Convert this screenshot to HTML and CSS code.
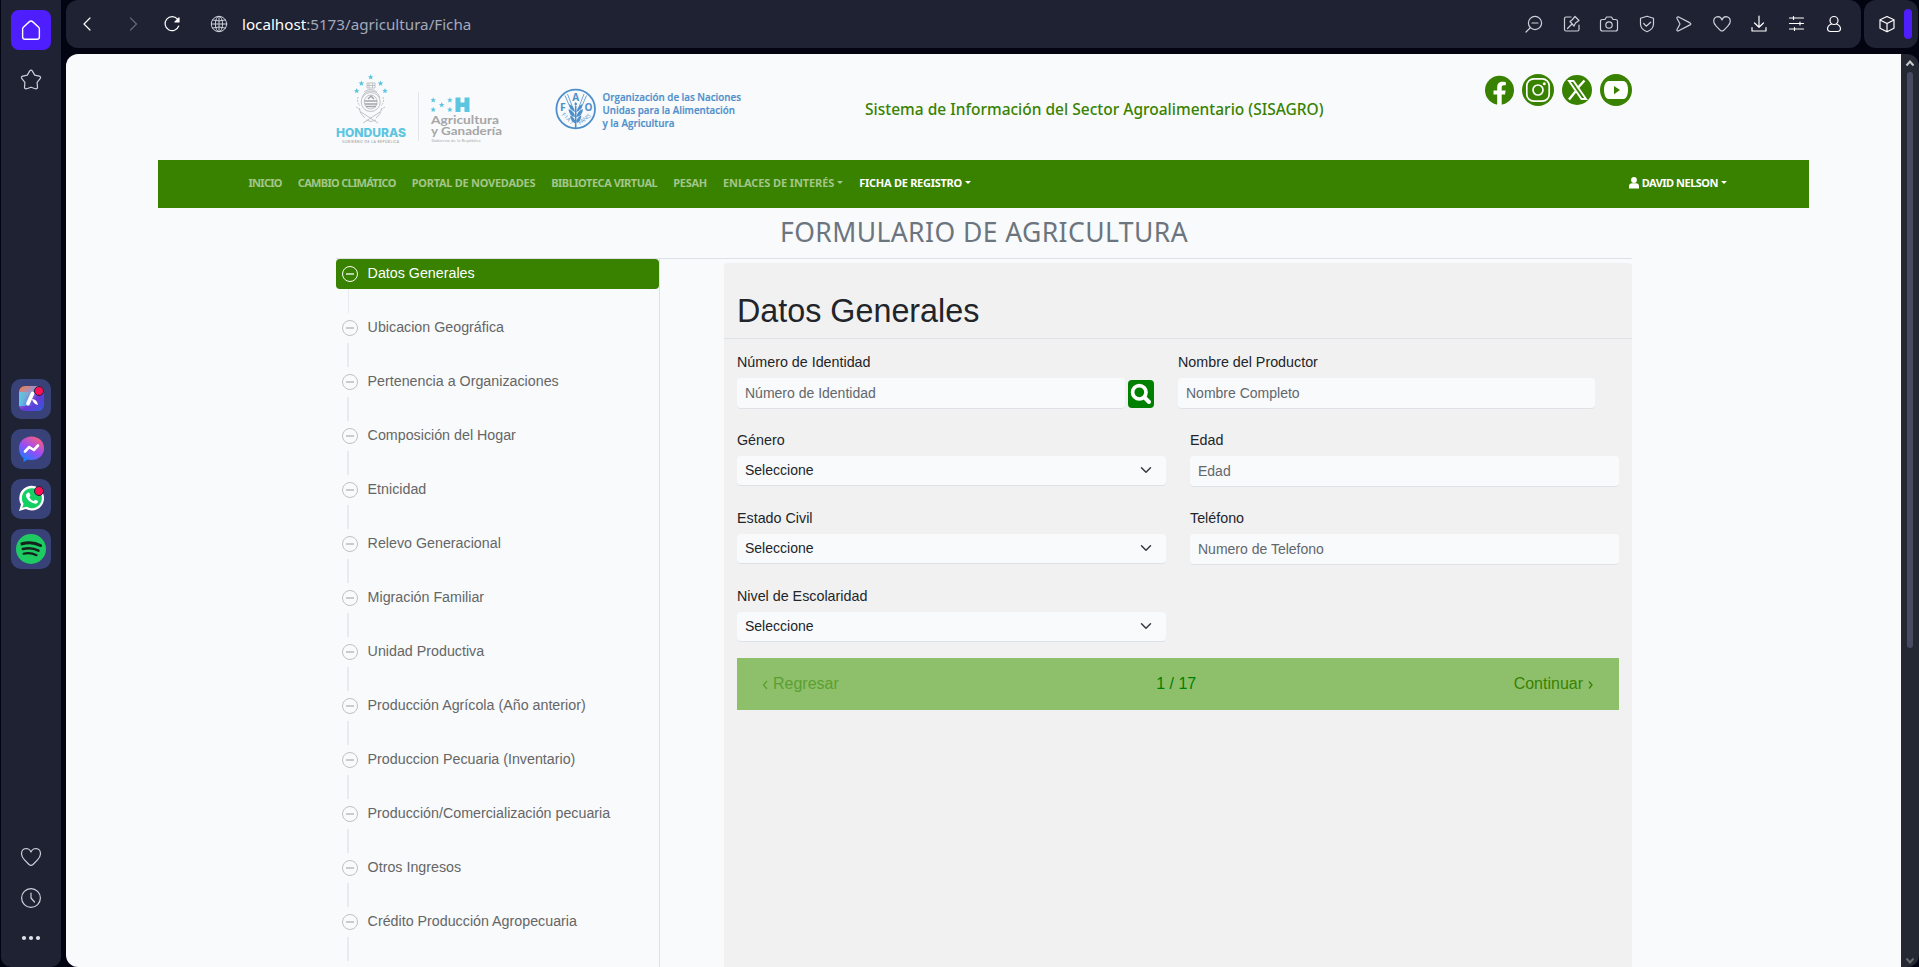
FILE: index.html
```html
<!DOCTYPE html>
<html lang="es">
<head>
<meta charset="utf-8">
<title>SISAGRO - Formulario de Agricultura</title>
<link rel="stylesheet" href="styles.css">
</head>
<body>
<div class="browser">
  <aside class="rail">
    <div class="rail-top">
      <div class="home"><svg width="24" height="24" viewBox="0 0 24 24"><path d="M3.5 9.4 10.3 3q1.7-1.500 3.400 0l6.800 6.400q.5.6.5 1.400v8.700q0 2.500-2.500 2.500h-13q-2.500 0-2.500-2.500v-8.700q0-.8.5-1.400z"/></svg></div>
      <svg class="line" width="24" height="24" viewBox="0 0 24 24"><path d="M10.600 3.100q1.400-2 2.800 0l2.300 4 4.500 1q2.200.7.900 2.600l-3 3.700.4 4.700q-.1 2.200-2.200 1.600L12 19.200l-4.300 1.500q-2.100.6-2.200-1.600l.4-4.700-3-3.700q-1.300-1.900.9-2.600l4.500-1z"/></svg>
    </div>
    <div class="rail-apps">
      <div class="tile"><svg width="40" height="40" viewBox="0 0 40 40"><defs><linearGradient id="aria" x1="0" y1="0" x2=".8" y2="1"><stop offset="0" stop-color="#ff7a3d"/><stop offset=".35" stop-color="#9b8fc4"/><stop offset=".65" stop-color="#6a35d8"/><stop offset="1" stop-color="#3b55d8"/></linearGradient><linearGradient id="ariaside"><stop offset="0" stop-color="#55c9e8"/><stop offset=".6" stop-color="#55c9e8" stop-opacity="0"/></linearGradient></defs><rect x="8" y="7" width="25" height="25" rx="6" fill="url(#aria)"/><rect x="8" y="13" width="25" height="14" fill="url(#ariaside)"/><path d="M21.500 14.500 17 24.500" stroke="#fff" stroke-width="3.800" stroke-linecap="round"/><path d="M21 20q5 0 6 6-5-1-6-6z" fill="#fff"/><circle cx="28" cy="12" r="4.500" fill="#ff1053" stroke="#20233a" stroke-width="1"/></svg></div>
      <div class="tile"><svg width="40" height="40" viewBox="0 0 40 40"><defs><linearGradient id="msg" x1=".8" y1="0" x2=".2" y2="1"><stop offset="0" stop-color="#ff5f78"/><stop offset=".5" stop-color="#9a4cf5"/><stop offset="1" stop-color="#0a84ff"/></linearGradient></defs><path d="M20.500 7.500c7.200 0 12.500 5 12.500 11.700S27.700 31 20.500 31q-2 0-3.700-.5L12.500 33v-3.800C9.600 27 8 23.500 8 19.200 8 12.500 13.300 7.500 20.500 7.500z" fill="url(#msg)"/><path d="m14 22.500 4.200-4.500 4.600 3 4.200-4.500" fill="none" stroke="#fff" stroke-width="2.600" stroke-linecap="round" stroke-linejoin="round"/></svg></div>
      <div class="tile"><svg width="40" height="40" viewBox="0 0 40 40"><path d="m8 32 2-6.500a12.400 12.400 0 1 1 4.800 4.600z" fill="#fff"/><path d="m11.300 28.800 1.300-4a10 10 0 1 1 3.200 3z" fill="#13cf64"/><path d="M16.500 14c1-.8 1.800-.5 2.200.6l.7 1.600c.3.800-1.200 1.600-.9 2.200q1.200 2.500 3.800 3.500c.8.300 1.400-1.500 2.200-1.200l2 1c.9.500.6 1.700-.5 2.500-3 2.200-12-3.600-10.900-8.600q.3-1 1.400-1.600z" fill="#fff"/><circle cx="28" cy="12" r="4.500" fill="#ff1053" stroke="#20233a" stroke-width="1"/></svg></div>
      <div class="tile"><svg width="40" height="40" viewBox="0 0 40 40"><circle cx="20" cy="20" r="15" fill="#1ecb62"/><g fill="none" stroke="#14211c" stroke-linecap="round"><path d="M11 14.800q10-2.800 18.500 1.700" stroke-width="3.100"/><path d="M11.800 20q8.500-2.200 15.700 1.600" stroke-width="2.500"/><path d="M12.500 24.700q7-1.600 13 1.500" stroke-width="2.100"/></g></svg></div>
    </div>
    <div class="rail-bottom">
      <svg class="line" width="24" height="24" viewBox="0 0 24 24"><path d="M12 7Q10.500 3.500 7 3.500 2.500 3.800 2.500 9q.2 3 3 5.800l4.500 4.700q2 1.700 4 0l4.500-4.700q2.800-2.800 3-5.800 0-5.200-4.500-5.500Q13.500 3.500 12 7z"/></svg>
      <svg class="line" width="24" height="24" viewBox="0 0 24 24"><circle cx="12" cy="12" r="9.400"/><path d="M12 7v5l3.500 4"/></svg>
      <svg width="24" height="24" viewBox="0 0 24 24" fill="#dfe2ec"><circle cx="5" cy="12" r="2.100"/><circle cx="12" cy="12" r="2.100"/><circle cx="19" cy="12" r="2.100"/></svg>
    </div>
  </aside>

  <div class="window">
    <div class="bars">
      <header class="toolbar">
        <svg class="line bright back" width="24" height="24" viewBox="0 0 24 24"><path d="m15 6-6 6 6 6"/></svg>
        <svg class="line dim" width="24" height="24" viewBox="0 0 24 24"><path d="m9.500 6 6 6-6 6"/></svg>
        <svg class="line bright reload" width="24" height="24" viewBox="0 0 24 24"><path d="M17.500 7.200a7 7 0 1 0 1.200 6.800"/><path d="M19 6v4h-4z" fill="#fff"/></svg>
        <svg class="line globe" width="24" height="24" viewBox="0 0 24 24"><circle cx="12" cy="12" r="7.700"/><ellipse cx="12" cy="12" rx="3.600" ry="7.700"/><path d="M4.300 12h15.400M12 4.300v15.400M5.500 8q6.500 2 13 0M5.500 16q6.500-2 13 0"/></svg>
        <div class="url"><span>localhost</span>:5173/agricultura/Ficha</div>
        <div class="tools">
          <svg class="line" width="24" height="24" viewBox="0 0 24 24"><circle cx="13" cy="11" r="6.600"/><path d="M10 11h6M8.500 15.500 4 20"/></svg>
          <svg class="line" width="24" height="24" viewBox="0 0 24 24"><path d="M11 5H6Q4.500 5 4.500 6.500v11Q4.500 19 6 19h11.500q1.500 0 1.500-1.500V13M7.500 16.500l4-4M10 9.500l4 4.500 1.500-3 3.500-2.500-4-4-3 3.500z"/></svg>
          <svg class="line" width="24" height="24" viewBox="0 0 24 24"><path d="M5.500 7.500H8L9.500 5h5L16 7.500h2.500Q20.500 7.500 20.500 9v8q0 2-2 2h-13q-2 0-2-2V9.500q0-2 2-2z"/><circle cx="12" cy="13" r="3.200"/></svg>
          <svg class="line" width="24" height="24" viewBox="0 0 24 24"><path d="m12 4.300 6.500 2v6.200q-.5 5-6.500 7.200-6-2.200-6.500-7.200V6.300z"/><path d="m8.700 11.500 2.500 2.700 4.500-4"/></svg>
          <svg class="line" width="24" height="24" viewBox="0 0 24 24"><path d="M6.200 4.800 18 10.900q1.700 1 0 2L6.200 19Q4.500 19 5 17.500L8 12 5 6.500Q4.500 4.800 6.200 4.800z"/></svg>
          <svg class="line" width="24" height="24" viewBox="0 0 24 24"><path d="M12 8Q11 4.800 8 4.700 4 5 3.700 9q0 2.700 2.500 5.100l4.100 4.200q1.700 1.400 3.400 0l4.100-4.200q2.500-2.400 2.500-5.100Q20 5 16 4.700 13 4.800 12 8z"/></svg>
          <svg class="line bright" width="24" height="24" viewBox="0 0 24 24"><path d="M12 4v11m-4.500-4 4.500 4.300 4.500-4.300M5 15.500V19h14v-3.500"/></svg>
          <svg class="line bright" width="24" height="24" viewBox="0 0 24 24"><path d="M4.500 6h14M4.500 11.500h14M4.500 17h14M8.500 4.500v3M15 10v3M9.500 15.500v3"/></svg>
          <svg class="line bright" width="24" height="24" viewBox="0 0 24 24"><circle cx="12" cy="8.500" r="4"/><path d="M9.500 12Q5.500 13.500 5.500 17q.3 2.500 3 2.500h7q2.700 0 3-2.500 0-3.500-4-5"/></svg>
        </div>
      </header>
      <div class="extra">
        <svg class="line bright" width="24" height="24" viewBox="0 0 24 24"><path d="m12 4.500 7 3.300v8.400l-7 3.600-7-3.600V7.800zM5 8l7 3.500L19 8M12 11.500v8"/></svg>
        <div class="pill"></div>
      </div>
    </div>

    <div class="viewport">
      <main class="page">
        <div class="masthead">
          <svg class="logos" width="430" height="84" viewBox="330 66 430 84" font-family="Lato, sans-serif">
            <g fill="#5cc5e0"><path id="star" d="m370.700 74.300.8 1.900 2 .1-1.600 1.300.6 2-1.800-1.100-1.800 1.100.6-2-1.600-1.300 2-.1z"/><use href="#star" x="-9.300" y="6.300"/><use href="#star" x="9.800" y="6.300"/><use href="#star" x="-14" y="13.700"/><use href="#star" x="14.300" y="13.700"/></g>
            <g fill="none" stroke="#c0c3c6" stroke-width="1"><path d="M367 83h8v5h-8zM367 85.500h8M369 83v5M372.500 83v5M364 92q6-5 13 0M362 98q2-7 9-7t9 7M361 112l17 11M380 112l-17 11M359 108q1 6 6 10M382 108q-1 6-6 10M366 120q5 3 10 0" /><path d="M358 97q-1.500 5 2 9M383 97q1.500 5-2 9M356 107l5 3M385 107l-5 3" stroke-dasharray="2 1"/><ellipse cx="370.700" cy="102" rx="9.500" ry="9.500"/><ellipse cx="370.700" cy="102" rx="6.500" ry="7"/><path d="M364.500 101h12.500M365 104h12M366 106.500h10M368 99l3-3 3 3" stroke="#a0a5a9" stroke-width="1.500"/></g>
            <text x="336" y="137.300" font-family="Inter, sans-serif" font-size="11.700" font-weight="800" fill="#5cc5e0" textLength="70" lengthAdjust="spacingAndGlyphs">HONDURAS</text>
            <text x="342" y="143" font-size="3.300" fill="#8d9195" textLength="57">GOBIERNO DE LA REPÚBLICA</text>
            <path d="M418.500 92v49" stroke="#e4e6e9"/>
            <g fill="#5cc5e0"><path d="M455.500 97.500h5v5h4v-5h5v14.500h-5v-5h-4v5h-5z"/><use href="#star" x="62.500" y="23"/><use href="#star" x="62.500" y="32.500"/><use href="#star" x="71" y="27.700"/><use href="#star" x="79.200" y="23"/><use href="#star" x="79.200" y="32.500"/></g>
            <g fill="#a6a6a6"><text x="431" y="124" font-size="11" font-weight="700" textLength="68" lengthAdjust="spacingAndGlyphs">Agricultura</text><text x="431" y="134.500" font-size="11" font-weight="700" textLength="71" lengthAdjust="spacingAndGlyphs">y Ganadería</text><text x="431.500" y="142.300" font-size="4" textLength="49">Gobierno de la República</text></g>
            <circle cx="575.700" cy="109" r="19.300" fill="none" stroke="#4e8fcb" stroke-width="1.800"/>
            <path d="m565 95.500 6 14M567.500 94l5 13M586.500 95.500l-6 14M584 94l-5 13" stroke="#4e8fcb" stroke-width=".8"/>
            <g fill="#4e8fcb" font-family="Open Sans, sans-serif" font-weight="700"><text x="575.700" y="101" font-size="10" text-anchor="middle">A</text><text x="560" y="110.500" font-size="10.500">F</text><text x="584.500" y="110.500" font-size="10">O</text><text font-size="5.500" font-weight="400" transform="translate(561.500 115) rotate(45)" textLength="14">FIAT</text><text font-size="5.500" font-weight="400" transform="translate(580 125) rotate(-38)" textLength="14">PANIS</text><path d="m575.700 102 1.500 2-1.500 2-1.500-2zM574.900 106h1.600v22h-1.600zM569 104q5 2 6 8-5-2-6-8zM582.500 104q-5 2-6 8 5-2 6-8zM568.500 109q6 2 6.500 8-6-1-6.500-8zM583 109q-6 2-6.500 8 6-1 6.500-8zM570 115.500q5 1.500 5.500 8-5-2-5.500-8zM581.500 115.500q-5 1.500-5.500 8 5-2 5.500-8z"/></g>
            <g fill="#4e8fcb" stroke="#4e8fcb" stroke-width=".2" font-family="Open Sans, sans-serif" font-size="11" font-weight="600"><text x="602.500" y="101" textLength="138.500" lengthAdjust="spacingAndGlyphs">Organización de las Naciones</text><text x="602.500" y="114" textLength="132.500" lengthAdjust="spacingAndGlyphs">Unidas para la Alimentación</text><text x="602.500" y="127" textLength="72" lengthAdjust="spacingAndGlyphs">y la Agricultura</text></g>
          </svg>
          <div class="system">Sistema de Información del Sector Agroalimentario (SISAGRO)</div>
          <div class="social">
            <svg width="29" height="32" viewBox="0 0 29 32"><circle cx="14.500" cy="16.300" r="14.500" fill="#388200"/><path d="M12.200 31V20.500H8.500v-4h3.700v-3.200c0-4 2.200-5.600 5.400-5.600q1.700 0 3.200.3v3.300H19c-1.700 0-2.300.9-2.300 2.200v3h4l-.7 4h-3.300V31z" fill="#fff"/></svg>
            <svg width="32" height="32" viewBox="0 0 32 32"><circle cx="16" cy="16" r="16" fill="#388200"/><g fill="none" stroke="#fff" stroke-width="1.700"><rect x="4.800" y="4.800" width="22.400" height="22.400" rx="7"/><circle cx="16" cy="16" r="5"/></g><circle cx="22.300" cy="9.700" r="1.500" fill="#fff"/></svg>
            <svg width="30" height="32" viewBox="0 0 30 32"><circle cx="15" cy="16" r="15" fill="#388200"/><path d="M7 7h4.500L24 25h-4.500z" fill="none" stroke="#fff" stroke-width="1.900"/><path d="m22.500 6.500-7 7.800M13.500 17.500 7 25.500" stroke="#fff" stroke-width="2.400"/></svg>
            <svg width="32" height="32" viewBox="0 0 32 32"><circle cx="16" cy="16" r="16" fill="#388200"/><path d="M8 7h16q4 1.500 4 9t-4 9H8q-4-1.500-4-9t4-9z" fill="#fff"/><path d="m14 12 6 4-6 4.300z" fill="#388200"/></svg>
          </div>
        </div>

        <nav class="navbar">
          <div class="menu">
            <a class="tight">INICIO</a><a class="tight">CAMBIO CLIMÁTICO</a><a>PORTAL DE NOVEDADES</a><a class="snug">BIBLIOTECA VIRTUAL</a><a>PESAH</a><a class="drop loose">ENLACES DE INTERÉS</a><a class="drop on">FICHA DE REGISTRO</a>
          </div>
          <div class="user"><svg width="10" height="12" viewBox="0 0 10 12" fill="#fff"><circle cx="5" cy="3" r="2.900"/><path d="M0 11.500V9q.4-2.700 3-2.700h4q2.600 0 3 2.700v2.500z"/></svg><a class="drop on">DAVID NELSON</a></div>
        </nav>

        <div class="content">
          <h1 class="title">FORMULARIO DE AGRICULTURA</h1>
          <div class="columns">
            <ul class="steps">
              <li class="active"><i></i><span>Datos Generales</span></li>
              <li><i></i><span>Ubicacion Geográfica</span></li>
              <li><i></i><span>Pertenencia a Organizaciones</span></li>
              <li><i></i><span>Composición del Hogar</span></li>
              <li><i></i><span>Etnicidad</span></li>
              <li><i></i><span>Relevo Generacional</span></li>
              <li><i></i><span>Migración Familiar</span></li>
              <li><i></i><span>Unidad Productiva</span></li>
              <li><i></i><span>Producción Agrícola (Año anterior)</span></li>
              <li><i></i><span>Produccion Pecuaria (Inventario)</span></li>
              <li><i></i><span>Producción/Comercialización pecuaria</span></li>
              <li><i></i><span>Otros Ingresos</span></li>
              <li><i></i><span>Crédito Producción Agropecuaria</span></li>
            </ul>
            <section class="panel">
              <h2>Datos Generales</h2>
              <div class="form">
                <div class="row first">
                  <div class="field id"><label>Número de Identidad</label><div class="group"><input placeholder="Número de Identidad"><button class="search"><svg width="26" height="28" viewBox="0 0 26 28" fill="none" stroke="#fff"><circle cx="11.300" cy="12.300" r="6.700" stroke-width="3.700"/><path d="m16.500 17.500 4.500 4.500" stroke-width="4" stroke-linecap="round"/></svg></button></div></div>
                  <div class="field name"><label>Nombre del Productor</label><input placeholder="Nombre Completo"></div>
                </div>
                <div class="row">
                  <div class="field"><label>Género</label><div class="select">Seleccione<svg width="12" height="12" viewBox="0 0 16 16"><path d="m2 5 6 6 6-6"/></svg></div></div>
                  <div class="field"><label>Edad</label><input placeholder="Edad"></div>
                </div>
                <div class="row">
                  <div class="field"><label>Estado Civil</label><div class="select">Seleccione<svg width="12" height="12" viewBox="0 0 16 16"><path d="m2 5 6 6 6-6"/></svg></div></div>
                  <div class="field"><label>Teléfono</label><input placeholder="Numero de Telefono"></div>
                </div>
                <div class="row">
                  <div class="field"><label>Nivel de Escolaridad</label><div class="select">Seleccione<svg width="12" height="12" viewBox="0 0 16 16"><path d="m2 5 6 6 6-6"/></svg></div></div>
                </div>
                <div class="pager"><span class="prev"><svg width="6" height="10" viewBox="0 0 6 10"><path d="M5 1 1.500 5 5 9"/></svg>Regresar</span><span class="count">1 / 17</span><span class="next">Continuar<svg width="6" height="10" viewBox="0 0 6 10"><path d="m1 1.500 3 3.500-3 3.500"/></svg></span></div>
              </div>
            </section>
          </div>
        </div>
      </main>
      <div class="scroll">
        <svg width="10" height="7" viewBox="0 0 10 7"><path d="m1.500 5.500 3.500-4 3.500 4" stroke="#c8c8ca"/></svg>
        <div class="thumb"></div>
        <svg class="down" width="10" height="7" viewBox="0 0 10 7"><path d="m1.500 1.500 3.500 4 3.500-4" stroke="#69696c"/></svg>
      </div>
    </div>
  </div>
</div>
</body>
</html>
```

FILE: styles.css
```css
* { box-sizing: border-box; }
body { margin: 0; overflow: hidden; background: #020412; font-family: "Liberation Sans", Arial, sans-serif; }
svg { display: block; flex: none; }
.browser { display: flex; gap: 5px; width: 1919px; height: 967px; padding-left: 1px; }
.line { fill: none; stroke: #cdd0da; stroke-width: 1.2; stroke-linejoin: round; stroke-linecap: round; }
.bright { stroke: #fff; stroke-width: 1.2; }
.dim { stroke: #646879; }

.rail { display: flex; flex-direction: column; justify-content: space-between; align-items: center; width: 60px; background: #1e2233; border-radius: 0 0 10px 10px; padding: 10px 0 17px; }
.rail-top, .rail-bottom { display: flex; flex-direction: column; align-items: center; gap: 18px; }
.rail-top { height: 369px; }
.rail-bottom { gap: 16.500px; }
.home { width: 40px; height: 40px; border-radius: 8px; background: #4f1eff; display: grid; place-items: center; }
.home svg { fill: none; stroke: #fff; stroke-width: 1.5; transform: scale(.93); }
.rail-top .line, .rail-bottom svg { margin-right: 1px; }
.rail-apps { display: flex; flex-direction: column; gap: 10px; flex: 1; }
.tile { width: 40px; height: 40px; border-radius: 10px; background: #394278; }

.window { flex: 1; display: flex; flex-direction: column; gap: 6px; min-width: 0; }
.bars { display: flex; gap: 3px; height: 48px; }
.toolbar { display: flex; align-items: center; width: 1795px; background: #1e2233; border-radius: 12px; padding: 0 15px 0 9px; }
.toolbar .dim { margin-left: 22px; }
.toolbar .reload { margin-left: 15px; }
.toolbar .globe { margin: 0 11px 0 23px; stroke-width: 1; }
.url { flex: 1; color: #a4a9bb; font: 15.2px "Noto Sans", sans-serif; white-space: nowrap; }
.url span { color: #fff; }
.tools { display: flex; gap: 13.500px; }
.extra { display: flex; align-items: center; width: 54px; background: #1e2233; border-radius: 12px; padding-left: 11px; gap: 5px; }
.pill { width: 8px; height: 30px; border-radius: 4px; background: #4f1eff; }

.viewport { display: flex; height: 913px; }
.page { width: 1835px; background: #f8fafc; border-radius: 12px 0 0 12px; overflow: hidden; }
.scroll { width: 18px; background: #242833; border-radius: 0 12px 12px 0; display: flex; flex-direction: column; align-items: center; padding: 6px 0 3px; }
.scroll path { fill: none; stroke-width: 2; }
.thumb { width: 6px; height: 576px; margin-top: 5px; border-radius: 3px; background: #474a61; }
.down { margin-top: auto; }

.masthead { display: flex; height: 106px; padding: 12px 0 0 264px; }
.system { width: 620px; margin: 32px 0 0 105px; color: #388200; font: 500 15.5px/22px "Noto Sans", sans-serif; white-space: nowrap; }
.social { display: flex; gap: 8px; margin-top: 8px; }

.navbar { display: flex; justify-content: space-between; align-items: center; width: 1651px; height: 48px; margin-left: 92px; background: #388200; padding: 0 82px 3px 90.500px; font: 700 11px "Noto Sans", sans-serif; letter-spacing: -.27px; color: #a4c68a; }
.menu { display: flex; gap: 16px; white-space: nowrap; }
.tight { letter-spacing: -.7px; }
.snug { letter-spacing: -.48px; }
.loose { letter-spacing: -.27px; }
.user { display: flex; gap: 3px; align-items: center; letter-spacing: -.5px; }
.drop { display: flex; align-items: center; gap: 3px; }
.drop::after { content: ""; border: 3px solid transparent; border-top-color: currentColor; border-bottom: 0; }
.drop.loose { letter-spacing: -.1px; }
.on { color: #fff; }

.content { width: 1296px; margin-left: 270px; }
.title { margin: 0; height: 51px; border-bottom: 1px solid #dee2e6; text-align: center; color: #6c757d; font: 400 26.5px/48px "Noto Sans", sans-serif; letter-spacing: .43px; }
.columns { display: flex; justify-content: space-between; height: 708px; }
.steps { list-style: none; margin: 0; padding: 0; width: 324px; border-right: 1px solid #dee2e6; display: flex; flex-direction: column; gap: 24px; font-size: 14.27px; color: #666; }
.steps li { display: flex; align-items: center; gap: 9.600px; height: 30px; padding-left: 6px; position: relative; flex: none; }
.steps span { padding-bottom: 2px; }
.steps i { width: 16px; height: 16px; border: 1px solid #bfc1c3; border-radius: 50%; display: grid; place-items: center; }
.steps i::after { content: ""; width: 8px; height: 2px; background: #c9cbcd; }
.steps li::after { content: ""; position: absolute; left: 11px; top: 30px; width: 2px; height: 24px; background: #e9eaf0; }
.steps .active { background: #388200; color: #fff; border-radius: 4px; }
.steps .active::after { left: 12px; width: 1px; }
.steps .active i { border-color: #fff; }
.steps .active i::after { background: #b7d3a2; }

.panel { width: 908px; margin-top: 4px; background: #f1f1f1; border-radius: 4px 4px 0 0; }
.panel h2 { margin: 0; height: 76px; border-bottom: 1px solid #dee2e6; padding: 30px 0 0 13px; font-size: 32.3px; line-height: 36px; font-weight: 400; color: #212529; }
.form { padding: 0 13px; }
.row { display: flex; gap: 24px; height: 78px; }
.field { width: 429px; padding-top: 13px; font-size: 14.3px; color: #212529; }
.field label { display: block; height: 26px; line-height: 20px; }
.field.id { width: 417px; }
.field.name { width: 417px; }
.field input { display: block; width: 100%; height: 31px; border: 0; border-bottom: 1px solid #dee2e6; border-radius: 4px; background: #f8fafc; padding: 0 8px; font: 14px "Liberation Sans", sans-serif; }
.field input::placeholder { color: #62676c; opacity: 1; }
.group { display: flex; gap: 3px; }
.search { width: 26px; height: 28px; flex: none; margin-top: 2px; border: 0; padding: 0; border-radius: 4px; background: #008000; }
.select { display: flex; align-items: center; justify-content: space-between; height: 30px; border-bottom: 1px solid #dee2e6; border-radius: 4px; background: #f8fafc; padding: 0 14px 1px 8px; font-size: 14px; }
.select svg { fill: none; stroke: #343a40; stroke-width: 2; stroke-linecap: round; stroke-linejoin: round; }
.pager { display: flex; align-items: center; justify-content: space-between; height: 52px; margin-top: 7px; padding: 0 25px; background: #8ec06c; font-size: 16px; color: #388200; }
.pager span { display: flex; align-items: center; gap: 5px; }
.pager svg { fill: none; stroke: currentColor; stroke-width: 1.3; margin-top: 2px; }
.prev { color: #5c9f31; }
.count { color: #008000; }
```
